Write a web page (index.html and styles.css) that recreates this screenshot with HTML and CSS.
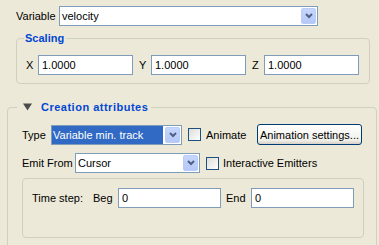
FILE: index.html
```html
<!DOCTYPE html>
<html lang="en">
<head>
    <meta charset="UTF-8">
    <title>Emitter settings</title>
    <link rel="stylesheet" href="styles.css">
</head>
<body>
    <div class="row var-row">
        <span class="lbl var-lbl">Variable</span>
        <div class="combo var-combo">
            <span class="combo-text">velocity</span>
            <span class="combo-btn"><svg width="8" height="6" viewBox="0 0 8 6"><path d="M1 1L4 4L7 1" fill="none" stroke="#4d6185" stroke-width="2"/></svg></span>
        </div>
    </div>

    <fieldset class="group scaling">
        <legend>Scaling</legend>
        <div class="row">
            <span class="axis">X</span>
            <input class="field xyz" value="1.0000">
            <span class="axis next">Y</span>
            <input class="field xyz" value="1.0000">
            <span class="axis next">Z</span>
            <input class="field xyz" value="1.0000">
        </div>
    </fieldset>

    <fieldset class="group creation">
        <legend>
            <svg class="tri" width="9" height="8" viewBox="0 0 9 8"><path d="M0 0.5H9L4.5 7.5Z" fill="#4c4c4c"/></svg>
            <span>Creation attributes</span>
        </legend>

        <div class="row type-row">
            <span class="lbl type-lbl">Type</span>
            <div class="combo type-combo">
                <span class="combo-text selected">Variable min. track</span>
                <span class="combo-btn"><svg width="8" height="6" viewBox="0 0 8 6"><path d="M1 1L4 4L7 1" fill="none" stroke="#4d6185" stroke-width="2"/></svg></span>
            </div>
            <span class="check"></span>
            <span class="check-lbl anim-lbl">Animate</span>
            <button class="btn">Animation settings...</button>
        </div>

        <div class="row emit-row">
            <span class="lbl emit-lbl">Emit From</span>
            <div class="combo emit-combo">
                <span class="combo-text">Cursor</span>
                <span class="combo-btn"><svg width="8" height="6" viewBox="0 0 8 6"><path d="M1 1L4 4L7 1" fill="none" stroke="#4d6185" stroke-width="2"/></svg></span>
            </div>
            <span class="check"></span>
            <span class="check-lbl">Interactive Emitters</span>
        </div>

        <div class="inner-box">
            <div class="row">
                <span class="lbl ts-lbl">Time step:</span>
                <span class="lbl be-lbl">Beg</span>
                <input class="field ts-field" value="0">
                <span class="lbl be-lbl end-lbl">End</span>
                <input class="field ts-field" value="0">
            </div>
        </div>
    </fieldset>
</body>
</html>
```

FILE: styles.css
```css
html, body {
    margin: 0;
    padding: 0;
    height: 245px;
    overflow: hidden;
}
body {
    background: #ece9d8;
    font-family: "Liberation Sans", Arial, sans-serif;
    font-size: 11px;
    color: #000;
}
.row {
    display: flex;
    align-items: center;
    height: 20px;
}
.lbl {
    white-space: nowrap;
}

/* variable row */
.var-row {
    padding: 6px 0 0 16px;
}
.var-lbl { width: 43px; }
.var-combo { width: 259px; }
.type-lbl { width: 29px; }
.type-combo { width: 131px; }
.emit-lbl { width: 53px; }
.emit-combo { width: 125px; }

/* combo boxes */
.combo {
    box-sizing: border-box;
    height: 20px;
    display: flex;
    border: 1px solid #7f9db9;
    background: #fff;
}
.combo-text {
    flex: 1;
    padding-left: 2px;
    line-height: 18px;
    white-space: nowrap;
    overflow: hidden;
}
.combo-text.selected {
    background: #316ac5;
    color: #fff;
    padding-left: 1px;
    margin-right: 1px;
}
.combo-btn {
    box-sizing: border-box;
    width: 15px;
    margin: 1px;
    border: 1px solid #b9cdf8;
    border-radius: 2px;
    background: linear-gradient(#c6d6fc, #b5c9f7);
    display: flex;
    align-items: center;
    justify-content: center;
}
.combo-btn svg {
    display: block;
}

/* group boxes */
.group {
    border: 1px solid #d0d0bf;
    border-radius: 4px;
    min-width: 0;
}
.group legend {
    font-weight: bold;
    color: #0046d5;
    line-height: 14px;
}
.scaling {
    margin: 5px 9px 0 16px;
    padding: 10px 9px 8px 9px;
}
.scaling legend {
    margin-left: -2px;
    padding: 0 2px 0 1px;
}
.creation {
    margin: 16px 2px 0 7px;
    padding: 10px 12px 12px 14px;
}
.creation legend {
    display: flex;
    align-items: center;
    margin-left: -5px;
    padding: 0 3px 0 6px;
    letter-spacing: 0.5px;
}
.tri {
    display: block;
    margin-right: 9px;
}

/* text fields */
.field {
    box-sizing: border-box;
    height: 20px;
    margin: 0;
    padding: 0 3px;
    border: 1px solid #7f9db9;
    background: #fff;
    font: inherit;
    color: #000;
    outline: none;
}
.axis {
    width: 12px;
}
.axis.next {
    margin-left: 6px;
}
.xyz {
    width: 95px;
}

/* creation rows */
.type-row {
    height: 21px;
}
.emit-row {
    margin-top: 8px;
}
.check {
    box-sizing: border-box;
    width: 13px;
    height: 13px;
    margin-left: 6px;
    border: 1px solid #1c5180;
    background: linear-gradient(135deg, #dcdcd7, #fff);
}
.check-lbl {
    margin-left: 4px;
    white-space: nowrap;
}
.anim-lbl {
    margin-left: 5px;
    width: 51px;
}
.btn {
    box-sizing: border-box;
    width: 105px;
    height: 21px;
    padding: 0;
    border: 1px solid #003c74;
    border-radius: 3px;
    background: linear-gradient(#fff, #f0f0ea 80%, #d6d0c5);
    font: inherit;
    color: #000;
}

.inner-box {
    margin-top: 5px;
    border: 1px solid #d0d0bf;
    border-radius: 4px;
    padding: 9px 9px 29px 9px;
}
.ts-lbl { width: 61px; }
.be-lbl { width: 25px; }
.end-lbl { margin-left: 5px; }
.ts-field { width: 103px; }
```
